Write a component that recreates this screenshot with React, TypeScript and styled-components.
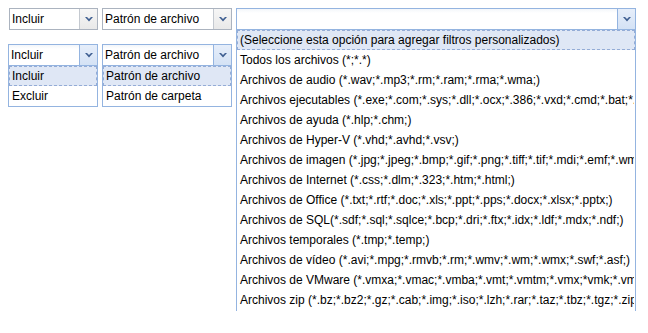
import React from 'react';
import styled, { createGlobalStyle } from 'styled-components';

// Filtros de copia: combos "Incluir/Excluir", tipo de patrón y lista de tipos de archivo

const GlobalStyle = createGlobalStyle`
  html, body, #root {
    margin: 0;
    padding: 0;
    height: 100%;
    background: #ffffff;
  }
  body {
    font-family: "Liberation Sans", Arial, sans-serif;
    font-size: 12px;
    color: #000000;
  }
`;

const fileTypes = [
  'Todos los archivos (*;*.*)',
  'Archivos de audio (*.wav;*.mp3;*.rm;*.ram;*.rma;*.wma;)',
  'Archivos ejecutables (*.exe;*.com;*.sys;*.dll;*.ocx;*.386;*.vxd;*.cmd;*.bat;*.pif;)',
  'Archivos de ayuda (*.hlp;*.chm;)',
  'Archivos de Hyper-V (*.vhd;*.avhd;*.vsv;)',
  'Archivos de imagen (*.jpg;*.jpeg;*.bmp;*.gif;*.png;*.tiff;*.tif;*.mdi;*.emf;*.wmf;)',
  'Archivos de Internet (*.css;*.dlm;*.323;*.htm;*.html;)',
  'Archivos de Office (*.txt;*.rtf;*.doc;*.xls;*.ppt;*.pps;*.docx;*.xlsx;*.pptx;)',
  'Archivos de SQL(*.sdf;*.sql;*.sqlce;*.bcp;*.dri;*.ftx;*.idx;*.ldf;*.mdx;*.ndf;)',
  'Archivos temporales (*.tmp;*.temp;)',
  'Archivos de vídeo (*.avi;*.mpg;*.rmvb;*.rm;*.wmv;*.wm;*.wmx;*.swf;*.asf;)',
  'Archivos de VMware (*.vmxa;*.vmac;*.vmba;*.vmt;*.vmtm;*.vmx;*vmk;*.vmdk;)',
  'Archivos zip (*.bz;*.bz2;*.gz;*.cab;*.img;*.iso;*.lzh;*.rar;*.taz;*.tbz;*.tgz;*.zip;)',
];

const Page = styled.div`
  min-height: 100vh;
  box-sizing: border-box;
  padding-top: 8px;
  display: flex;
  flex-direction: column;
  gap: 14px;
`;

const Row = styled.div<{ $left: number; $top?: boolean }>`
  display: flex;
  gap: 4px;
  padding-left: ${(p) => p.$left}px;
  align-items: flex-start;
  position: relative;
  z-index: ${(p) => (p.$top ? 3 : 1)};
`;

const ComboWrap = styled.div<{ $w: number }>`
  position: relative;
  width: ${(p) => p.$w}px;
  flex: none;
`;

const Box = styled.div<{ $active?: boolean }>`
  display: flex;
  height: 22px;
  box-sizing: border-box;
  border: 1px solid ${(p) => (p.$active ? '#94b4e0' : '#abb3bf')};
  background: ${(p) =>
    p.$active ? 'linear-gradient(#f3f6fa, #ffffff 4px)' : '#ffffff'};
`;

const Value = styled.div`
  flex: 1;
  padding-left: 2px;
  line-height: 21px;
  white-space: nowrap;
  overflow: hidden;
`;

const ArrowButton = styled.div<{ $active?: boolean }>`
  width: 17px;
  flex: none;
  display: flex;
  align-items: center;
  justify-content: center;
  border-left: 1px solid ${(p) => (p.$active ? '#94b4e0' : '#c4c9d0')};
  background: ${(p) =>
    p.$active
      ? 'linear-gradient(#e6eefa, #d4e2f5)'
      : 'linear-gradient(#f6f6f6, #e9e9e9)'};
`;

const List = styled.div<{ $open?: boolean; $h?: number }>`
  position: absolute;
  top: 21px;
  left: 0;
  right: 0;
  background: #ffffff;
  border: 1px solid #94b4e0;
  ${(p) => (p.$open ? 'border-bottom: none;' : '')}
  ${(p) => (p.$h ? `height: ${p.$h}px; overflow: hidden;` : '')}
  z-index: 2;
`;

const Item = styled.div<{ $selected?: boolean }>`
  height: 20px;
  box-sizing: border-box;
  line-height: 18px;
  padding-left: 2px;
  white-space: nowrap;
  overflow: hidden;
  border: 1px ${(p) => (p.$selected ? 'dashed #94acd6' : 'solid transparent')};
  background: ${(p) => (p.$selected ? '#dfe7f5' : 'transparent')};
`;

const Chevron = () => (
  <svg width="8" height="5" viewBox="0 0 8 5">
    <polygon points="0,0 2,0 4,2 6,0 8,0 4,4.5" fill="#3f5f91" />
  </svg>
);

type ComboProps = {
  width: number;
  value: string;
  active?: boolean;
  options?: string[];
  selected?: number;
  listHeight?: number;
};

const Combo = ({ width, value, active, options, selected, listHeight }: ComboProps) => (
  <ComboWrap $w={width}>
    <Box $active={active}>
      <Value>{value}</Value>
      <ArrowButton $active={active}>
        <Chevron />
      </ArrowButton>
    </Box>
    {options && (
      <List $open={!!listHeight} $h={listHeight}>
        {options.map((o, i) => (
          <Item key={o} $selected={i === selected}>
            {o}
          </Item>
        ))}
      </List>
    )}
  </ComboWrap>
);

export default function App() {
  return (
    <>
      <GlobalStyle />
      <Page>
        <Row $left={9} $top>
          <Combo width={89} value="Incluir" />
          <Combo width={130} value="Patrón de archivo" />
          <Combo
            width={400}
            value=""
            active
            options={['(Seleccione esta opción para agregar filtros personalizados)', ...fileTypes]}
            selected={0}
            listHeight={281}
          />
        </Row>
        <Row $left={8}>
          <Combo width={90} value="Incluir" active options={['Incluir', 'Excluir']} selected={0} />
          <Combo
            width={130}
            value="Patrón de archivo"
            active
            options={['Patrón de archivo', 'Patrón de carpeta']}
            selected={0}
          />
        </Row>
      </Page>
    </>
  );
}
